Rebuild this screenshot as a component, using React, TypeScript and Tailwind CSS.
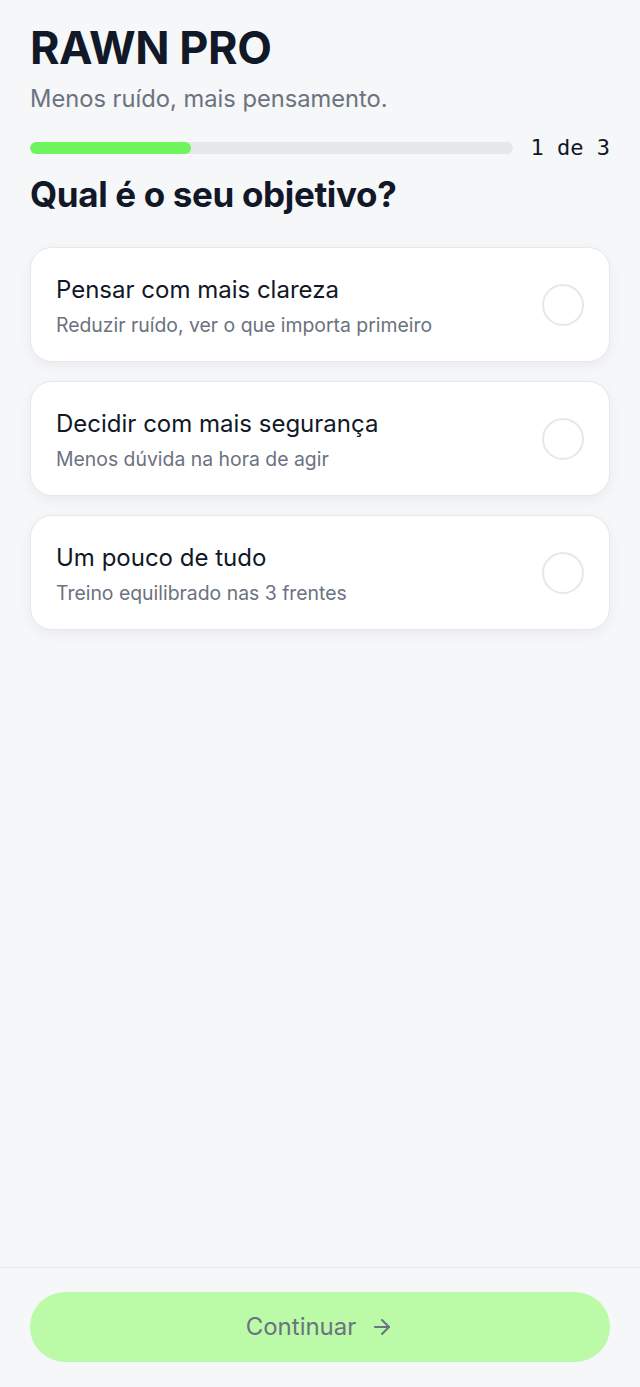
import { ArrowRight } from "lucide-react";

const options = [
  { title: "Pensar com mais clareza", desc: "Reduzir ruído, ver o que importa primeiro" },
  { title: "Decidir com mais segurança", desc: "Menos dúvida na hora de agir" },
  { title: "Um pouco de tudo", desc: "Treino equilibrado nas 3 frentes" },
];

function OptionCard({ title, desc }: { title: string; desc: string }) {
  return (
    <button className="flex h-[115px] w-full items-center justify-between rounded-[22px] border border-[#e6e8ec] bg-white px-[25px] text-left shadow-[0_4px_14px_rgba(15,23,42,0.05)]">
      <div className="flex flex-col pt-[3px]">
        <span className="text-[24px] leading-[30px] text-[#111827]">{title}</span>
        <span className="mt-[8px] text-[19.4px] leading-[24px] text-[#6b7280]">{desc}</span>
      </div>
      <span className="h-[42px] w-[42px] shrink-0 rounded-full border-2 border-[#e5e7eb]" />
    </button>
  );
}

export default function App() {
  return (
    <main className="flex min-h-screen flex-col bg-[#f6f7f9] font-['Inter',sans-serif] text-[#111827]">
      <div className="flex-1 px-[30px] pt-[22px]">
        <h1 className="text-[45px] font-bold leading-[52px] tracking-[-0.01em]">RAWN PRO</h1>
        <p className="mt-[10px] text-[23.7px] leading-[30px] text-[#6b7280]">
          Menos ruído, mais pensamento.
        </p>

        <div className="mt-[22px] flex items-center gap-[18px]">
          <div className="h-[12px] flex-1 overflow-hidden rounded-full bg-[#e5e7eb]">
            <div className="h-full w-1/3 rounded-full bg-[#6ef45c]" />
          </div>
          <span className="font-['DejaVu_Sans_Mono',monospace] text-[22px] leading-[24px] text-[#111827]">
            1 de 3
          </span>
        </div>

        <h2 className="mt-[12px] text-[35px] font-bold leading-[44px] tracking-[-0.01em]">
          Qual é o seu objetivo?
        </h2>

        <div className="mt-[31px] flex flex-col gap-[19px]">
          {options.map((o) => (
            <OptionCard key={o.title} title={o.title} desc={o.desc} />
          ))}
        </div>
      </div>

      <footer className="border-t border-[#e5e7eb] px-[30px] pb-[25px] pt-[24px]">
        <button className="flex h-[70px] w-full items-center justify-center gap-[14px] rounded-full bg-[#bbfba8] text-[24px] text-[#6b7280]">
          Continuar
          <ArrowRight size={24} strokeWidth={2} />
        </button>
      </footer>
    </main>
  );
}
